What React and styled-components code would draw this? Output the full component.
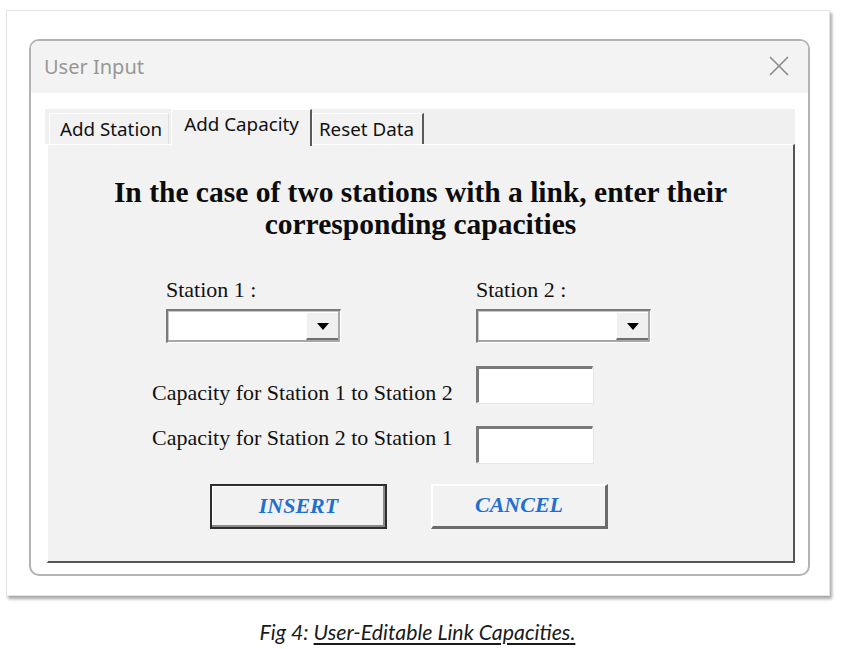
import React from "react";
import styled, { createGlobalStyle } from "styled-components";

const GlobalStyle = createGlobalStyle`
  html, body {
    margin: 0;
    padding: 0;
    background: #ffffff;
  }
  * {
    box-sizing: border-box;
  }
`;

const Page = styled.div`
  width: 847px;
  height: 649px;
  padding: 10px 0 0 6px;
  background: #ffffff;
`;

const Frame = styled.div`
  width: 824px;
  height: 586px;
  padding: 28px 0 0 22px;
  background: #ffffff;
  border: 1px solid #e4e4e4;
  box-shadow: 2px 3px 3px rgba(0, 0, 0, 0.35);
`;

const Window = styled.div`
  width: 781px;
  height: 537px;
  border: 2px solid #b3b3b3;
  border-radius: 10px;
  overflow: hidden;
  background: #ffffff;
  display: flex;
  flex-direction: column;
`;

const TitleBar = styled.div`
  height: 52px;
  flex: none;
  background: #f3f3f3;
  display: flex;
  align-items: center;
  justify-content: space-between;
  padding: 0 18px 0 13px;
`;

const Title = styled.span`
  font-family: "Noto Sans", "Open Sans", sans-serif;
  font-size: 20px;
  color: #979797;
  margin-top: -2px;
`;

const CloseButton = styled.div`
  width: 22px;
  height: 22px;
  display: flex;
  align-items: center;
  justify-content: center;
  margin-top: -2px;
`;

const Body = styled.div`
  flex: 1;
  padding: 16px 13px 11px 14px;
  display: flex;
  flex-direction: column;
`;

const TabStrip = styled.div`
  height: 35px;
  flex: none;
  background: #f0f0f0;
  display: flex;
  align-items: flex-end;
  padding-left: 4px;
  position: relative;
  z-index: 1;
`;

const Tab = styled.div`
  height: ${(p) => (p.$active ? "37px" : "31px")};
  margin-bottom: ${(p) => (p.$active ? "-2px" : "0")};
  padding: 0 ${(p) => p.$pr}px ${(p) => (p.$active ? "8px" : "0")} ${(p) => p.$pl}px;
  margin-left: ${(p) => p.$ml}px;
  display: flex;
  align-items: center;
  background: #f2f2f2;
  border-top: 1px solid #ffffff;
  border-left: 1px solid #ffffff;
  border-right: ${(p) => (p.$dark ? "2px solid #5a5a5a" : "1px solid #e2e2e2")};
  font-family: "Noto Sans", "Open Sans", sans-serif;
  font-size: 18.8px;
  color: #111111;
  white-space: nowrap;
`;

const Panel = styled.div`
  flex: 1;
  margin-left: 2px;
  background: #f2f2f2;
  border-top: 1px solid #ffffff;
  border-left: 1px solid #ffffff;
  border-right: 2px solid #555555;
  border-bottom: 2px solid #555555;
  display: flex;
  flex-direction: column;
  padding-top: 31px;
  font-family: "Liberation Serif", "Times New Roman", serif;
  color: #111111;
`;

const Heading = styled.h1`
  margin: 0;
  font-family: "Liberation Serif", "Times New Roman", serif;
  font-weight: bold;
  font-size: 29.5px;
  line-height: 32px;
  text-align: center;
  color: #0c0c0c;
`;

const StationRow = styled.div`
  display: flex;
  gap: 135px;
  padding-left: 118px;
  margin-top: 38px;
`;

const StationGroup = styled.div`
  display: flex;
  flex-direction: column;
  gap: 7px;
`;

const Label = styled.label`
  font-size: 22px;
  line-height: 24px;
  white-space: nowrap;
`;

const Combo = styled.div`
  width: 175px;
  height: 34px;
  background: #ffffff;
  border-top: 2px solid #7a7a7a;
  border-left: 2px solid #7a7a7a;
  border-right: 1px solid #ffffff;
  border-bottom: 1px solid #ffffff;
  box-shadow: inset -2px -2px 0 #a8a8a8, inset 1px 1px 0 #c8c8c8;
  display: flex;
  justify-content: flex-end;
  padding: 1px 2px 2px 0;
`;

const DropButton = styled.div`
  width: 32px;
  height: 100%;
  background: #f0f0f0;
  border-top: 1px solid #ffffff;
  border-left: 1px solid #ffffff;
  border-bottom: 2px solid #707070;
  display: flex;
  align-items: center;
  justify-content: center;
`;

const Arrow = styled.span`
  width: 0;
  height: 0;
  border-left: 6px solid transparent;
  border-right: 6px solid transparent;
  border-top: 7px solid #000000;
  margin-top: 2px;
`;

const CapacityList = styled.div`
  display: flex;
  flex-direction: column;
  gap: 21px;
  margin-top: 23px;
  padding-left: 104px;
`;

const CapacityRow = styled.div`
  display: flex;
  align-items: flex-start;
`;

const CapacityLabel = styled(Label)`
  width: 324px;
  margin-top: ${(p) => p.$offset}px;
`;

const TextBox = styled.div`
  width: 117px;
  height: 37px;
  background: #ffffff;
  border-top: 3px solid #7a7a7a;
  border-left: 3px solid #7a7a7a;
  border-right: 1px solid #ffffff;
  border-bottom: 1px solid #ffffff;
  box-shadow: 1px 1px 0 #e6e6e6;
`;

const ButtonRow = styled.div`
  display: flex;
  gap: 44px;
  padding-left: 162px;
  margin-top: 21px;
`;

const Button = styled.div`
  width: 177px;
  height: 45px;
  display: flex;
  align-items: center;
  justify-content: center;
  background: #f2f2f2;
  font-family: "Liberation Serif", "Times New Roman", serif;
  font-weight: bold;
  font-style: italic;
  font-size: 22px;
  color: #1f6fd1;
  padding-bottom: 2px;
  ${(p) =>
    p.$default
      ? `
    border: 2px solid #2e2e2e;
    box-shadow: inset -2px -2px 0 #8a8a8a, inset 1px 1px 0 #ffffff;
  `
      : `
    border-top: 2px solid #ffffff;
    border-left: 2px solid #ffffff;
    border-right: 3px solid #6b6b6b;
    border-bottom: 3px solid #6b6b6b;
  `}
`;

const Caption = styled.p`
  margin: 23px 0 0;
  text-align: center;
  padding-right: 18px;
  font-family: Lato, "Open Sans", sans-serif;
  font-style: italic;
  font-size: 21.3px;
  color: #1a1a1a;
`;

const Underlined = styled.span`
  text-decoration: underline;
  text-underline-offset: 3px;
`;

const CloseIcon = () => (
  <svg width="22" height="22" viewBox="0 0 22 22">
    <path d="M2 2 L20 20 M20 2 L2 20" stroke="#8a8a8a" strokeWidth="1.6" fill="none" />
  </svg>
);

const StationSelect = ({ label }) => (
  <StationGroup>
    <Label>{label}</Label>
    <Combo>
      <DropButton>
        <Arrow />
      </DropButton>
    </Combo>
  </StationGroup>
);

const capacityRows = [
  { text: "Capacity for Station 1 to Station 2", offset: 15 },
  { text: "Capacity for Station 2 to Station 1", offset: 0 },
];

export default function App() {
  return (
    <>
      <GlobalStyle />
      <Page>
        <Frame>
          <Window>
            <TitleBar>
              <Title>User Input</Title>
              <CloseButton>
                <CloseIcon />
              </CloseButton>
            </TitleBar>
            <Body>
              <TabStrip>
                <Tab $pl={10} $pr={6} $ml={0}>Add Station</Tab>
                <Tab $active $dark $pl={12} $pr={11} $ml={2}>Add Capacity</Tab>
                <Tab $dark $pl={6} $pr={8} $ml={0}>Reset Data</Tab>
              </TabStrip>
              <Panel>
                <Heading>
                  In the case of two stations with a link, enter their
                  <br />
                  corresponding capacities
                </Heading>
                <StationRow>
                  <StationSelect label="Station 1 :" />
                  <StationSelect label="Station 2 :" />
                </StationRow>
                <CapacityList>
                  {capacityRows.map((row) => (
                    <CapacityRow key={row.text}>
                      <CapacityLabel $offset={row.offset}>{row.text}</CapacityLabel>
                      <TextBox />
                    </CapacityRow>
                  ))}
                </CapacityList>
                <ButtonRow>
                  <Button $default>INSERT</Button>
                  <Button>CANCEL</Button>
                </ButtonRow>
              </Panel>
            </Body>
          </Window>
        </Frame>
        <Caption>
          Fig 4: <Underlined>User-Editable Link Capacities.</Underlined>
        </Caption>
      </Page>
    </>
  );
}
